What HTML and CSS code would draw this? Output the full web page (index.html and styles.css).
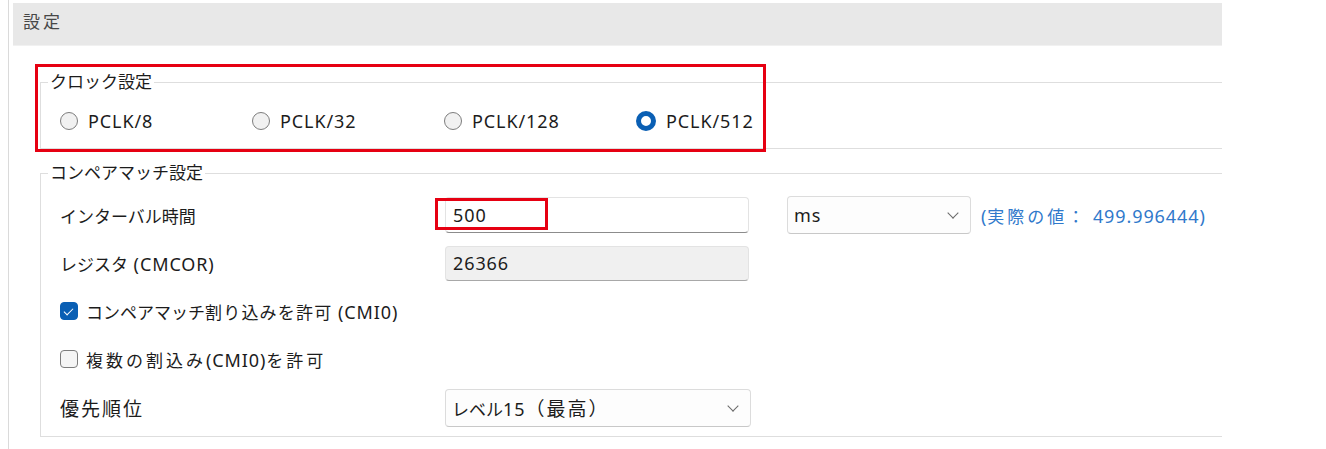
FILE: index.html
```html
<!DOCTYPE html>
<html lang="ja">
<head>
<meta charset="utf-8">
<title>設定</title>
<link rel="stylesheet" href="styles.css">
</head>
<body>
<div class="frame">
  <div class="header"><span class="wide">設定</span></div>
  <div class="content">
    <div class="mark-wrap">
      <fieldset class="group clock">
        <legend>クロック設定</legend>
        <div class="radios">
          <label class="radio"><span class="rb"></span><span class="en">PCLK/8</span></label>
          <label class="radio"><span class="rb"></span><span class="en">PCLK/32</span></label>
          <label class="radio"><span class="rb"></span><span class="en">PCLK/128</span></label>
          <label class="radio"><span class="rb on"></span><span class="en">PCLK/512</span></label>
        </div>
      </fieldset>
      <div class="mark mark-clock"></div>
    </div>

    <fieldset class="group match">
      <legend>コンペアマッチ設定</legend>
      <div class="rows">
        <div class="row">
          <span class="lbl">インターバル時間</span>
          <div class="field-wrap">
            <div class="field"><span class="en">500</span></div>
            <div class="mark mark-value"></div>
          </div>
          <div class="select unit"><span class="en">ms</span><span class="chev"></span></div>
          <span class="actual"><span class="en">(</span><span class="wide">実際の値：</span><span class="en"> 499.996444)</span></span>
        </div>
        <div class="row">
          <span class="lbl">レジスタ<span class="en"> (CMCOR)</span></span>
          <div class="field ro"><span class="en">26366</span></div>
        </div>
        <div class="row">
          <label class="check"><span class="cb on"></span><span>コンペアマッチ<span class="semi">割り込みを許可</span><span class="en"> (CMI0)</span></span></label>
        </div>
        <div class="row">
          <label class="check"><span class="cb"></span><span><span class="wide">複数の割込み</span><span class="en">(CMI0)</span><span class="wide">を許可</span></span></label>
        </div>
        <div class="row tall">
          <span class="lbl"><span class="big">優先順位</span></span>
          <div class="select prio"><span>レベル<span class="en">15</span><span class="big">（最高）</span></span><span class="chev"></span></div>
        </div>
      </div>
    </fieldset>
  </div>
</div>
</body>
</html>
```

FILE: styles.css
```css
* { box-sizing: border-box; }
html, body { margin: 0; padding: 0; background: #ffffff; }
body {
  font-family: "Noto Sans", "Noto Sans CJK JP", sans-serif;
  font-size: 17px;
  color: #1c1c1c;
  width: 1326px;
  height: 449px;
  overflow: hidden;
}
.en {
  font-size: 18px;
  letter-spacing: 0.9px;
}
.wide { letter-spacing: 3px; }
.semi { letter-spacing: 1.2px; }
.big { font-size: 19px; letter-spacing: 2px; }
.frame {
  margin-left: 8px;
  border-left: 1px solid #dadada;
  height: 449px;
  padding-top: 3px;
  padding-left: 4px;
  width: 1214px;
}
.header {
  height: 43px;
  background: #e8e8e8;
  border-bottom: 1px solid #f1f1f1;
  padding: 7px 0 0 10px;
  line-height: 24px;
  color: #474747;
  font-size: 17px;
}
.content {
  padding-left: 27px;
  padding-top: 24px;
}
.mark-wrap { position: relative; }
.mark {
  position: absolute;
  border: 3px solid #e60012;
  pointer-events: none;
}
.mark-clock { left: -5px; top: -6px; width: 731px; height: 88px; }

.group {
  margin: 0;
  border: 1px solid #dedede;
  border-right: none;
  padding: 0 0 0 7px;
  min-width: 0;
}
.group legend {
  padding: 0 2px;
  line-height: 24px;
  font-size: 17px;
  color: #1c1c1c;
}
.clock { padding-top: 15px; padding-bottom: 15px; }
.radios {
  display: grid;
  grid-template-columns: 192px 192px 192px 192px;
  margin-left: 12px;
  height: 24px;
}
.radio {
  display: flex;
  align-items: center;
  gap: 10px;
  line-height: 24px;
}
.rb {
  width: 18px;
  height: 18px;
  border-radius: 50%;
  border: 1px solid #7d7d7d;
  background: #f1f1f1;
  flex: none;
}
.rb.on {
  border: 5.5px solid #0a5fb4;
  background: #ffffff;
  width: 20px;
  height: 20px;
}

.match { margin-top: 12px; padding-top: 12px; padding-bottom: 9px; }
.rows {
  display: flex;
  flex-direction: column;
  gap: 12px;
  margin-left: 12px;
}
.row {
  display: flex;
  align-items: center;
  height: 36px;
}
.row.tall { height: 38px; }
.lbl { width: 385px; flex: none; }
.field-wrap { position: relative; }
.field {
  width: 304px;
  height: 36px;
  border: 1px solid #e3e3e3;
  border-bottom: 1px solid #8c8c8c;
  border-radius: 4px;
  background: #ffffff;
  padding-left: 7px;
  display: flex;
  align-items: center;
}
.field.ro { background: #f0f0f0; border-bottom-color: #a8a8a8; height: 35px; }
.mark-value { left: -10px; top: 1px; width: 113px; height: 32px; }

.select {
  position: relative;
  height: 38px;
  border: 1px solid #dcdcdc;
  border-bottom-color: #c8c8c8;
  border-radius: 4px;
  background: #fdfdfd;
  display: flex;
  align-items: center;
  padding-left: 6px;
}
.select.unit { width: 184px; margin-left: 38px; }
.select.prio { width: 306px; }
.chev {
  position: absolute;
  right: 13px;
  top: 12px;
  width: 8px;
  height: 8px;
  border-right: 1.4px solid #6a6a6a;
  border-bottom: 1.4px solid #6a6a6a;
  transform: rotate(45deg);
}
.actual {
  margin-left: 10px;
  color: #3079cb;
}
.check {
  display: flex;
  align-items: center;
  gap: 8px;
}
.cb {
  width: 18px;
  height: 18px;
  border: 1px solid #7d7d7d;
  border-radius: 4px;
  background: #f5f5f5;
  flex: none;
  position: relative;
}
.cb.on {
  background: #0a5fb4;
  border-color: #0a5fb4;
}
.cb.on::after {
  content: "";
  position: absolute;
  left: 5px;
  top: 3px;
  width: 4px;
  height: 8px;
  border-right: 1.5px solid #ffffff;
  border-bottom: 1.5px solid #ffffff;
  transform: rotate(45deg);
}
```
